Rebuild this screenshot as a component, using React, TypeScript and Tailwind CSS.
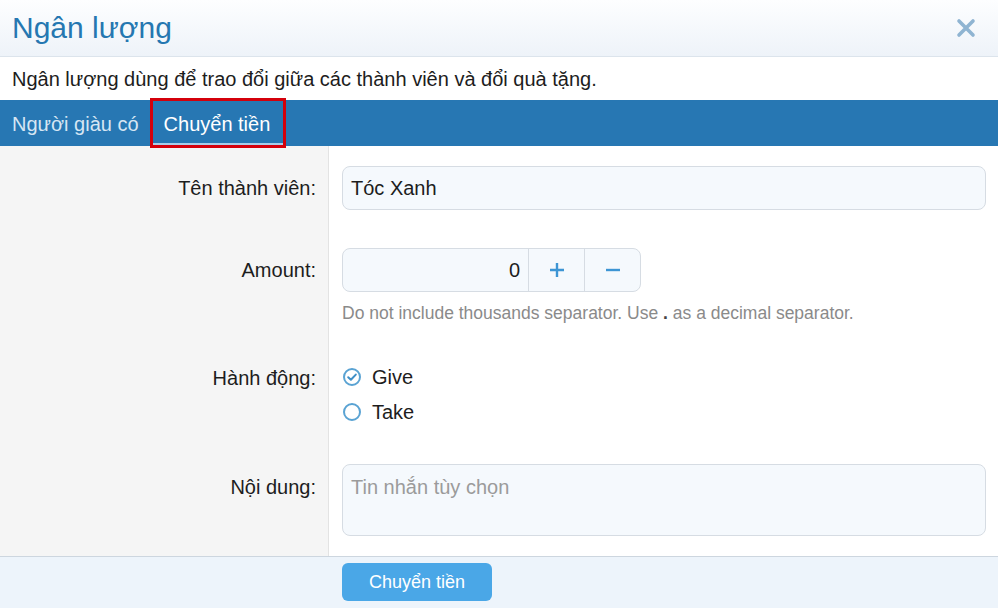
import React from "react"

const font = { fontFamily: '"Liberation Sans", Arial, sans-serif' }

function RadioIcon({ checked }: { checked: boolean }) {
  return (
    <svg width="20" height="20" viewBox="0 0 20 20" className="shrink-0">
      <circle cx="10" cy="10" r="8" fill="#fff" stroke="#5aa3d3" strokeWidth="2" />
      {checked && (
        <path d="M6.2 10.2 L8.9 12.8 L13.8 7.6" fill="none" stroke="#3f8fc7" strokeWidth="2" strokeLinecap="round" strokeLinejoin="round" />
      )}
    </svg>
  )
}

export default function App() {
  return (
    <div className="w-[998px] h-[608px] flex flex-col bg-white text-[#1d1d1d] overflow-hidden" style={font}>
      {/* header */}
      <div className="h-[57px] shrink-0 flex items-center justify-between pl-3 pr-[22px] bg-gradient-to-b from-[#fdfeff] to-[#eef3f9] border-b border-[#dce4ec]">
        <h1 className="text-[30px] text-[#2577b1] leading-none">Ngân lượng</h1>
        <svg width="20" height="20" viewBox="0 0 20 20">
          <path d="M3 3 L17 17 M17 3 L3 17" stroke="#8fb4d2" strokeWidth="3.6" strokeLinecap="round" />
        </svg>
      </div>

      {/* description */}
      <div className="h-[43px] shrink-0 flex items-center px-3 pt-[1px] text-[20px]">
        Ngân lượng dùng để trao đổi giữa các thành viên và đổi quà tặng.
      </div>

      {/* tabs */}
      <div className="h-[46px] shrink-0 flex items-end bg-[#2777b3] pl-3 text-[20px]">
        <div className="h-full flex items-center pr-[14px] pt-[2px] text-[#d6e6f3]">Người giàu có</div>
        <div className="relative h-full flex items-center pl-[11px] pr-[13px] pt-[4px] text-white border-b-[3px] border-[#a9cde9]">
          Chuyển tiền
          <div className="absolute -left-[3px] -right-[3px] -top-[2px] -bottom-[5px] border-[3px] border-[#d4000b]" />
        </div>
      </div>

      {/* body */}
      <div className="flex-1 flex">
        <div className="w-[329px] shrink-0 bg-[#f5f5f5] border-r border-[#e3e3e3] text-[20px] text-right pr-3">
          <div className="h-[44px] mt-[20px] flex items-center justify-end">Tên thành viên:</div>
          <div className="h-[44px] mt-[38px] flex items-center justify-end">Amount:</div>
          <div className="h-[35px] mt-[68px] flex items-center justify-end">Hành động:</div>
          <div className="h-[44px] mt-[70px] flex items-center justify-end">Nội dung:</div>
        </div>
        <div className="flex-1 pl-[13px] pr-3 text-[20px]">
          <div className="h-[44px] mt-[20px] rounded-lg border border-[#d6dce3] bg-[#f5f9fd] flex items-center px-2">
            Tóc Xanh
          </div>
          <div className="mt-[38px] w-[299px] h-[44px] rounded-lg border border-[#d6dce3] bg-[#f5f9fd] flex">
            <div className="flex-1 flex items-center justify-end pr-2">0</div>
            <div className="w-[56px] border-l border-[#d6dce3] flex items-center justify-center">
              <svg width="16" height="16" viewBox="0 0 16 16"><path d="M8 1 V15 M1 8 H15" stroke="#3d95d4" strokeWidth="2.4" /></svg>
            </div>
            <div className="w-[56px] border-l border-[#d6dce3] flex items-center justify-center">
              <svg width="16" height="16" viewBox="0 0 16 16"><path d="M1 8 H15" stroke="#3d95d4" strokeWidth="2.4" /></svg>
            </div>
          </div>
          <div className="mt-[8px] text-[17.5px] text-[#8a8a8a]">
            Do not include thousands separator. Use <span className="font-bold text-[#444]">.</span> as a decimal separator.
          </div>
          <div className="mt-[39px] flex flex-col gap-[11px]">
            <label className="flex items-center gap-[10px] h-[24px]"><RadioIcon checked />Give</label>
            <label className="flex items-center gap-[10px] h-[24px]"><RadioIcon checked={false} />Take</label>
          </div>
          <div className="mt-[40px] h-[72px] rounded-lg border border-[#d6dce3] bg-[#f5f9fd] px-2 pt-[7px] text-[#9b9b9b]">
            Tin nhắn tùy chọn
          </div>
        </div>
      </div>

      {/* footer */}
      <div className="h-[52px] shrink-0 bg-[#edf4fb] border-t border-[#cdd6df] pl-[342px] pt-[6px]">
        <button className="w-[150px] h-[38px] rounded-md bg-[#4aa7e7] text-white text-[18px]">Chuyển tiền</button>
      </div>
    </div>
  )
}
